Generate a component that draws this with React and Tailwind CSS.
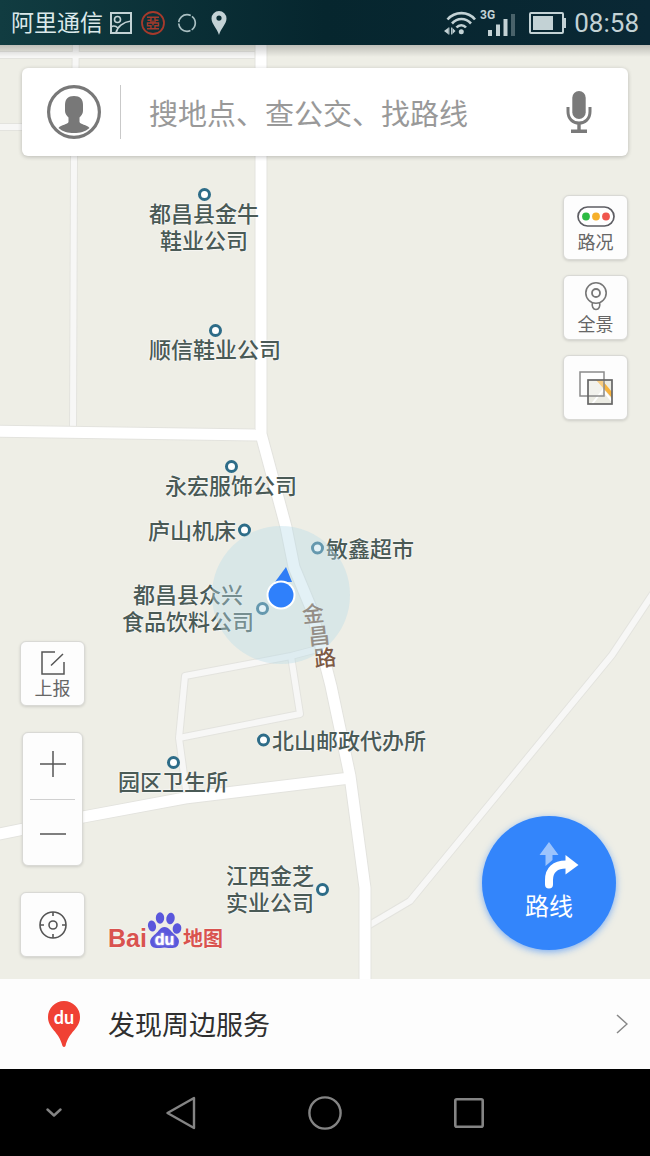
import React from "react";

const CASING = "#e3e3de";
const MAJOR = "#ffffff";
const MINOR = "#f7f7f6";

const minorRoads = [
  "M-10 10H261",
  "M76 -10L74 115L73 386",
  "M-10 82H75",
  "M325 602L291 611L185 631L179 693L187 752",
  "M179 693L300 669L291 611",
  "M366 882L410 856L612 610L652 550L712 460",
];

const majorRoads = [
  "M261 -10V389L286 482L294 522L311 563L331 641L350 731L365 843V1400",
  "M-10 386L262 390",
  "M-10 791L83 772L185 753L350 733",
];

const places = [
  { lines: ["都昌县金牛", "鞋业公司"], side: "top", at: "left-[204px] top-[143px]" },
  { lines: ["顺信鞋业公司"], side: "top", at: "left-[215px] top-[279px]" },
  { lines: ["永宏服饰公司"], side: "top", at: "left-[231px] top-[415px]" },
  { lines: ["庐山机床"], side: "right", at: "left-[148px] top-[485px]" },
  { lines: ["敏鑫超市"], side: "left", at: "left-[311px] top-[503px]" },
  { lines: ["都昌县众兴", "食品饮料公司"], side: "right", at: "left-[122px] top-[563px]" },
  { lines: ["北山邮政代办所"], side: "left", at: "left-[257px] top-[695px]" },
  { lines: ["园区卫生所"], side: "top", at: "left-[173px] top-[711px]" },
  { lines: ["江西金芝", "实业公司"], side: "right", at: "left-[226px] top-[844px]" },
];

const sideClass = {
  top: "flex-col -translate-x-1/2",
  left: "flex-row gap-0.5 -translate-y-1/2",
  right: "flex-row-reverse gap-0.5 -translate-y-1/2",
};

const roadName = [
  { char: "金", at: "left-[302px] top-[557px]" },
  { char: "昌", at: "left-[308px] top-[579px]" },
  { char: "路", at: "left-[314px] top-[601px]" },
];

function Place({ lines, side, at }) {
  return (
    <div className={`absolute flex items-center ${sideClass[side]} ${at}`}>
      <span className="size-[13px] shrink-0 rounded-full border-[3px] border-[#2d6c88] bg-white" />
      <span className="-mt-0.5 text-center text-[22px] leading-[27px] font-medium whitespace-nowrap text-[#4a5a56] [text-shadow:0_0_2px_#fff,0_0_2px_#fff]">
        {lines.map((l) => (
          <span key={l} className="block">{l}</span>
        ))}
      </span>
    </div>
  );
}

function MapCanvas() {
  return (
    <div className="absolute inset-0 overflow-hidden bg-[#eeeee6]">
      <svg className="absolute inset-0 size-full" fill="none" strokeLinejoin="round" aria-hidden="true">
        {minorRoads.map((d) => <path key={d} d={d} stroke={CASING} strokeWidth="8" />)}
        {minorRoads.map((d) => <path key={d} d={d} stroke={MINOR} strokeWidth="6" />)}
        {majorRoads.map((d) => <path key={d} d={d} stroke={CASING} strokeWidth="13" />)}
        {majorRoads.map((d) => <path key={d} d={d} stroke={MAJOR} strokeWidth="11" />)}
      </svg>
      {places.map((p) => <Place key={p.lines[0]} {...p} />)}
      {roadName.map((r) => (
        <span key={r.char} className={`absolute -rotate-6 text-[22px] leading-5 font-medium text-[#7d5a45] [text-shadow:0_0_2px_#fff] ${r.at}`}>{r.char}</span>
      ))}
      <svg className="absolute left-[211px] top-[480px] size-[140px]" viewBox="0 0 140 140" aria-hidden="true">
        <circle cx="70" cy="70" r="69" fill="#b8dce8" fillOpacity=".4" />
        <path d="M75 42L81 57L64 57Z" fill="#2f7df6" />
        <circle cx="70" cy="70" r="14.500" fill="#fff" />
        <circle cx="70" cy="70" r="12.500" fill="#2f80fb" />
      </svg>
      <div className="absolute left-[108px] top-[865px] flex h-10 items-end text-[#d9534f] [text-shadow:0_0_2px_#fff]">
        <span className="font-['Liberation_Sans',sans-serif] text-[25px] leading-6 font-bold">Bai</span>
        <svg className="h-10 w-9" viewBox="0 0 36 40" aria-hidden="true">
          <g fill="#5a57dc">
            <ellipse cx="5" cy="16" rx="4" ry="5.5" transform="rotate(-12 5 16)" />
            <ellipse cx="13" cy="8" rx="4.2" ry="5.8" />
            <ellipse cx="23.500" cy="8.500" rx="4.200" ry="5.800" transform="rotate(10 23.5 8.5)" />
            <ellipse cx="30" cy="18.500" rx="4.300" ry="5.300" transform="rotate(10 30 18.5)" />
            <path d="M17.500 17C22 17 23.500 21 27 24C31 27.500 33 30 31.500 34C30 38.500 26 38.500 17.500 37.500C9 38.500 5 38.500 3.500 34C2 29.500 5 27 8.500 24C12 21 13 17 17.500 17Z" />
          </g>
          <text x="17.500" y="35" textAnchor="middle" fill="#fff" fontFamily="Liberation Sans, sans-serif" fontSize="16" fontWeight="700">du</text>
        </svg>
        <span className="text-[20px] leading-6 font-bold">地图</span>
      </div>
      <div className="absolute inset-x-0 top-0 h-3 bg-gradient-to-b from-black/20 to-transparent" />
    </div>
  );
}

function StatusBar() {
  return (
    <header className="flex h-[45px] shrink-0 items-center justify-between bg-gradient-to-r from-[#113c41] via-[#06262e] to-[#0a2835] px-[11px] text-[#c3d2d5]">
      <div className="flex items-center">
        <span className="-mt-1 text-[23px] leading-7 text-[#dbe9ea]">阿里通信</span>
        <svg className="ml-[7px] size-[22px]" viewBox="0 0 22 22" fill="none" stroke="currentColor" strokeWidth="2" aria-hidden="true">
          <rect x="1" y="1" width="20" height="20" />
          <circle cx="7.500" cy="7.500" r="3" strokeWidth="1.600" />
          <path d="M6 21C7 15 13 10 21 9M1 15C4 13 6 14 8 16" strokeWidth="1.600" />
        </svg>
        <svg className="ml-[9px] size-6" viewBox="0 0 24 24" fill="none" stroke="#a63a2c" aria-hidden="true">
          <circle cx="12" cy="12" r="11" strokeWidth="1.800" />
          <path d="M6 6.200H18M6 17.800H18M12 9.500V14.500M6.500 9.200H10V12H6.500V14.800H10V17.500M17.500 9.200H14V12H17.500V14.800H14V17.500M10 12H14M10 6.500V9M14 6.500V9" strokeWidth="1.400" />
        </svg>
        <svg className="ml-3 size-5" viewBox="0 0 20 20" fill="none" stroke="#a9bfc2" strokeWidth="1.700" aria-hidden="true">
          <circle cx="10" cy="10" r="8.300" strokeDasharray="16 1.380" strokeDashoffset="8" />
        </svg>
        <svg className="ml-3.5 h-6 w-4" viewBox="0 0 16 24" fill="currentColor" aria-hidden="true">
          <path fillRule="evenodd" d="M8 0A7.500 7.500 0 0 0 .5 7.500C.5 13 6 17 8 24C10 17 15.500 13 15.500 7.500A7.500 7.500 0 0 0 8 0ZM8 4.500A2.600 2.600 0 1 1 8 9.700A2.600 2.600 0 0 1 8 4.500Z" />
        </svg>
      </div>
      <div className="flex items-center">
        <svg className="h-6 w-8" viewBox="0 0 32 24" fill="none" stroke="currentColor" strokeWidth="2.600" aria-hidden="true">
          <path d="M3.500 8.500C11 0 24 0 31 8.500M8 12.500C13.500 6.500 21.500 6.500 27 12.500M12.500 16.500C15 13.500 19.500 13.500 22 16.500" />
          <circle cx="17.300" cy="20.800" r="2.500" fill="currentColor" stroke="none" />
          <path d="M4 17V23L0 20ZM8.500 17L11.500 20L8.500 23Z" fill="currentColor" stroke="none" />
          <path d="M4.800 16.500V23.500M7.700 16.500V23.500" strokeWidth="1.200" />
        </svg>
        <svg className="ml-1 h-[27px] w-9 overflow-visible" viewBox="0 0 36 27" fill="currentColor" aria-hidden="true">
          <text x="0" y="9.500" fontFamily="Roboto, sans-serif" fontWeight="700" fontSize="12">3G</text>
          <path d="M8 21H12V27H8ZM16 15.500H20V27H16ZM23.500 10H27.500V27H23.500Z" />
          <path d="M31 5H35V27H31Z" opacity=".35" />
        </svg>
        <svg className="ml-[13px] h-[22px] w-[37px]" viewBox="0 0 37 22" aria-hidden="true">
          <rect x="1" y="1" width="33" height="20" rx="1" fill="none" stroke="currentColor" strokeWidth="2" />
          <path d="M4 4H24V18H4ZM34 6H37V16H34Z" fill="currentColor" />
        </svg>
        <time className="ml-2 font-['Roboto',sans-serif] text-[26px] leading-7">08:58</time>
      </div>
    </header>
  );
}

function SearchBar() {
  return (
    <form className="mx-[22px] mt-[23px] flex h-[88px] items-center rounded-md bg-white pr-9 pl-[25px] shadow-[0_1px_4px_rgba(0,0,0,0.22)]">
      <button type="button" aria-label="个人中心" className="shrink-0">
        <svg className="size-[54px]" viewBox="0 0 54 54" aria-hidden="true">
          <circle cx="27" cy="27" r="25.400" fill="none" stroke="#787878" strokeWidth="3.200" />
          <path d="M27 11C33 11 36 14 36 20V26C36 29 34 31 32.500 32.500V37C33 39.500 40 39.500 42.500 43C38 47 33 48 27 48C21 48 16 47 11.500 43C14 39.500 21 39.500 21.500 37V32.500C20 31 18 29 18 26V20C18 14 21 11 27 11Z" fill="#787878" />
        </svg>
      </button>
      <span className="ml-[19px] h-[54px] w-px shrink-0 bg-[#c9c9c9]" />
      <input
        type="text"
        aria-label="搜索"
        placeholder="搜地点、查公交、找路线"
        className="ml-7 h-12 min-w-0 flex-1 bg-transparent text-[29px] text-[#555] outline-none placeholder:text-[#999] placeholder:opacity-100"
      />
      <button type="button" aria-label="语音搜索" className="shrink-0">
        <svg className="h-[42px] w-[26px]" viewBox="0 0 26 42" fill="none" stroke="#7a7a7a" aria-hidden="true">
          <rect x="6.300" y="0" width="13.400" height="28" rx="6.700" fill="#7a7a7a" stroke="none" />
          <path d="M2 16V20.500C2 28 7 32 13 32C19 32 24 28 24 20.500V16" strokeWidth="3" />
          <path d="M13 32V40M5 40.200H21" strokeWidth="3.400" />
        </svg>
      </button>
    </form>
  );
}

const tile =
  "flex size-[65px] flex-col items-center justify-center rounded-md border border-[#d9d9d5] bg-[#fdfdfd] text-[18px] leading-5 text-[#666] shadow-[0_1px_3px_rgba(0,0,0,0.14)]";

function RightTiles() {
  return (
    <div className="flex flex-col gap-[15px]">
      <button type="button" className={`${tile} gap-1`}>
        <svg className="mt-0.5 h-[21px] w-[38px]" viewBox="0 0 38 21" aria-hidden="true">
          <rect x="1" y="1" width="36" height="19" rx="9.500" fill="#fff" stroke="#5d5d63" strokeWidth="1.700" />
          <circle cx="9" cy="10.500" r="3.900" fill="#2dbb43" />
          <circle cx="19" cy="10.500" r="3.900" fill="#f6b02c" />
          <circle cx="29" cy="10.500" r="3.900" fill="#f0564e" />
        </svg>
        路况
      </button>
      <button type="button" className={`${tile} gap-0.5`}>
        <svg className="h-[29px] w-6" viewBox="-1 0 24 29" fill="none" stroke="#777" strokeWidth="1.600" aria-hidden="true">
          <circle cx="11" cy="11" r="10.200" />
          <circle cx="11" cy="11" r="4" strokeWidth="1.800" />
          <path d="M7.500 20.500C6.500 24 8 27.500 11 27.500C14 27.500 15.500 24 14.500 20.500" />
        </svg>
        全景
      </button>
      <button type="button" aria-label="图层" className={tile}>
        <svg className="size-[34px]" viewBox="0 0 34 34" fill="none" aria-hidden="true">
          <path d="M9 9H33V33H9Z" fill="#ecece4" />
          <path d="M17 9H23L33 21V27Z" fill="#f6b23c" />
          <path d="M13 33L24 19L33 30" stroke="#fff" strokeWidth="2" />
          <rect x="1" y="1" width="24" height="24" fill="#fff" fillOpacity=".35" stroke="#8b8b8b" strokeWidth="1.500" />
          <rect x="9" y="9" width="24" height="24" stroke="#666" strokeWidth="1.700" />
        </svg>
      </button>
    </div>
  );
}

function LeftTiles() {
  return (
    <div className="flex flex-col items-center justify-end gap-[26px]">
      <button type="button" className={`${tile} gap-0.5`}>
        <svg className="size-6" viewBox="0 0 24 24" fill="none" stroke="#555" strokeWidth="1.500" aria-hidden="true">
          <path d="M14 1H1V23H23V11M10 14.500L22 3" />
        </svg>
        上报
      </button>
      <div className="flex h-[134px] w-[61px] flex-col items-center rounded-md border border-[#d9d9d5] bg-[#fdfdfd] shadow-[0_1px_3px_rgba(0,0,0,0.14)]">
        <button type="button" aria-label="放大" className="flex w-full flex-1 items-center justify-center">
          <svg className="-mt-1 size-[26px]" viewBox="0 0 26 26" stroke="#555" strokeWidth="1.500" aria-hidden="true"><path d="M0 13H26M13 0V26" /></svg>
        </button>
        <span className="h-px w-[45px] bg-[#d0d0d0]" />
        <button type="button" aria-label="缩小" className="flex w-full flex-1 items-center justify-center">
          <svg className="mt-1 size-[26px]" viewBox="0 0 26 26" stroke="#555" strokeWidth="1.500" aria-hidden="true"><path d="M0 13H26" /></svg>
        </button>
      </div>
      <button type="button" aria-label="定位" className={tile}>
        <svg className="size-7" viewBox="0 0 28 28" fill="none" stroke="#555" strokeWidth="1.600" aria-hidden="true">
          <circle cx="14" cy="14" r="13" />
          <circle cx="14" cy="14" r="4" />
          <path d="M14 1V5M14 23V27M1 14H5M23 14H27" />
        </svg>
      </button>
    </div>
  );
}

export default function App() {
  return (
    <div className="flex min-h-screen flex-col bg-black font-['Noto_Sans_CJK_SC',sans-serif]">
      <StatusBar />
      <main className="relative flex flex-1 flex-col">
        <MapCanvas />
        <div className="relative flex flex-1 flex-col">
          <SearchBar />
          <div className="flex flex-1 justify-between pt-[39px] pr-[22px] pb-[22px] pl-5">
            <LeftTiles />
            <div className="flex flex-col items-end justify-between gap-8">
              <RightTiles />
              <button type="button" className="mr-3 mb-[7px] flex size-[134px] flex-col items-center rounded-full bg-[#3385fb] pt-[25px] text-[24px] leading-8 text-white shadow-[0_2px_7px_rgba(51,133,251,0.6)]">
                <svg className="ml-5 h-12 w-10" viewBox="0 0 40 48" aria-hidden="true">
                  <path d="M10 1L19.500 14H13.500V19L6.500 25V14H.5Z" fill="#9cc4fd" />
                  <path d="M10 43.500V39C10 29 16 23.500 27 23.500" fill="none" stroke="#fff" strokeWidth="8" strokeLinecap="round" />
                  <path d="M26.500 14L39.500 24L26.500 33.500Z" fill="#fff" />
                </svg>
                路线
              </button>
            </div>
          </div>
        </div>
      </main>
      <a href="#nearby" className="flex h-[90px] shrink-0 items-center bg-[#fdfdfd] pr-[22px] pl-12 text-[27px] text-[#2f2f2f]">
        <svg className="h-[46px] w-8" viewBox="0 0 32 46" aria-hidden="true">
          <path d="M16 0A16 16 0 0 0 0 16C0 28 11 30 14.500 45Q16 47 17.500 45C21 30 32 28 32 16A16 16 0 0 0 16 0Z" fill="#f04134" />
          <text x="16" y="23" textAnchor="middle" fill="#fff" fontFamily="Lato, sans-serif" fontSize="18" fontWeight="700">du</text>
        </svg>
        <span className="ml-7 flex-1">发现周边服务</span>
        <svg className="h-5 w-3" viewBox="0 0 12 20" fill="none" stroke="#888" strokeWidth="1.500" aria-hidden="true"><path d="M1 1L11 10L1 19" /></svg>
      </a>
      <nav className="grid h-[87px] shrink-0 grid-cols-[3fr_4fr_4fr_4fr_3fr] items-center justify-items-center text-[#848484]">
        <button type="button" aria-label="收起">
          <svg className="h-3 w-4" viewBox="0 0 16 12" fill="none" stroke="currentColor" strokeWidth="2.400" strokeLinecap="round" strokeLinejoin="round" aria-hidden="true"><path d="M1.500 2.500L8 8.500L14.500 2.500" /></svg>
        </button>
        <button type="button" aria-label="返回">
          <svg className="h-[34px] w-[30px]" viewBox="0 0 30 34" fill="none" stroke="currentColor" strokeWidth="2.400" strokeLinejoin="round" aria-hidden="true"><path d="M28 2V32L1.500 17Z" /></svg>
        </button>
        <button type="button" aria-label="主页">
          <svg className="size-[34px]" viewBox="0 0 34 34" fill="none" stroke="currentColor" strokeWidth="2.400" aria-hidden="true"><circle cx="17" cy="17" r="15.600" /></svg>
        </button>
        <button type="button" aria-label="最近任务">
          <svg className="size-[30px]" viewBox="0 0 30 30" fill="none" stroke="currentColor" strokeWidth="2.600" aria-hidden="true"><rect x="1.300" y="1.300" width="27.400" height="27.400" rx="1.500" /></svg>
        </button>
      </nav>
    </div>
  );
}
